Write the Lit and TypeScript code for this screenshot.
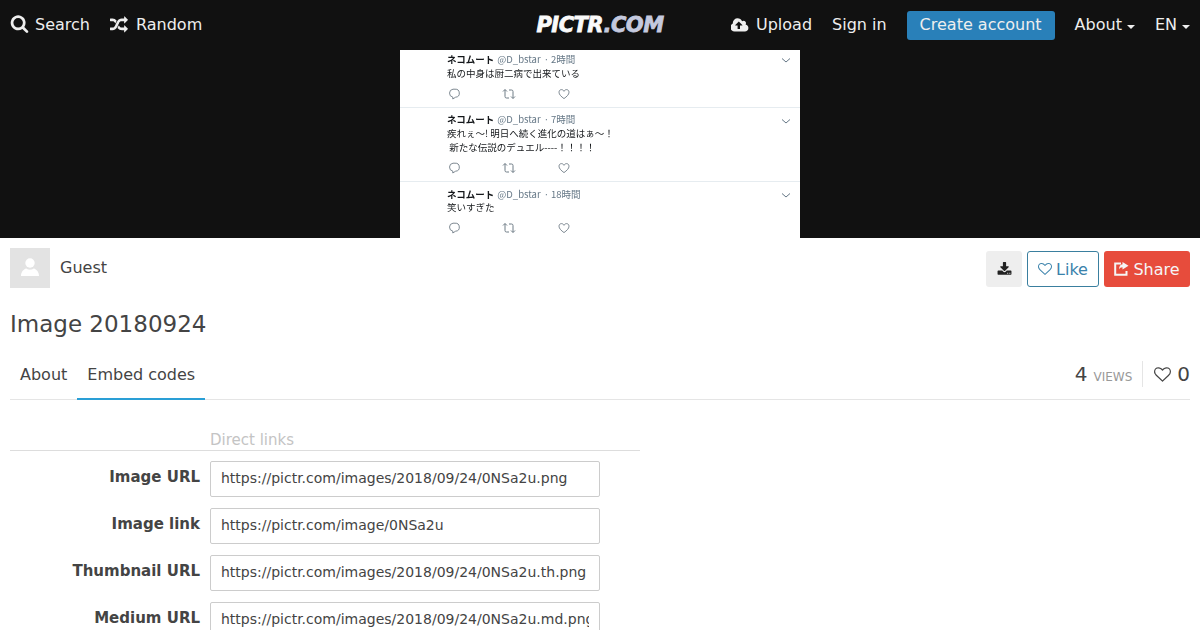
import { LitElement, html, css, svg } from "lit";
import { customElement } from "lit/decorators.js";

const P = {
  search: "M1216 832q0-185-131.5-316.5t-316.5-131.5-316.5 131.5-131.5 316.5 131.5 316.5 316.5 131.5 316.5-131.5 131.5-316.5zm512 832q0 52-38 90t-90 38q-54 0-90-38l-343-342q-179 124-399 124-143 0-273.5-55.5t-225-150-150-225-55.5-273.5 55.5-273.5 150-225 225-150 273.5-55.5 273.5 55.5 225 150 150 225 55.5 273.5q0 220-124 399l343 343q37 37 37 90z",
  random: "M666 481q-60 92-137 273-22-45-37-72.5t-40.5-63.5-51-56.5-63-35-81.5-14.5h-224q-14 0-23-9t-9-23v-192q0-14 9-23t23-9h224q250 0 410 225zm1126 799q0 14-9 23l-320 320q-9 9-23 9-13 0-22.5-9.5t-9.5-22.5v-192q-32 0-85 .5t-81 1-73-1-71-5-64-10.5-63-18.5-58-28.5-59-40-55-53.5-56-69.5q59-93 136-273 22 45 37 72.5t40.5 63.5 51 56.5 63 35 81.5 14.5h256v-192q0-14 9-23t23-9q12 0 24 10l319 319q9 9 9 23zm0-896q0 14-9 23l-320 320q-9 9-23 9-13 0-22.5-9.5t-9.5-22.5v-192h-256q-48 0-87 15t-69 45-51 61.5-45 77.5q-32 62-78 171-29 66-49.5 111t-54 105-64 100-74 83-90 68.5-106.5 42-128 16.5h-224q-14 0-23-9t-9-23v-192q0-14 9-23t23-9h224q48 0 87-15t69-45 51-61.5 45-77.5q32-62 78-171 29-66 49.5-111t54-105 64-100 74-83 90-68.5 106.5-42 128-16.5h256v-192q0-14 9-23t23-9q12 0 24 10l319 319q9 9 9 23z",
  upload: "M1216 864q0-14-9-23l-352-352q-9-9-23-9t-23 9l-351 351q-10 12-10 24 0 14 9 23t23 9h224v352q0 13 9.5 22.5t22.5 9.5h192q13 0 22.5-9.5t9.5-22.5v-352h224q13 0 22.5-9.5t9.5-22.5zm640 288q0 159-112.5 271.5t-271.5 112.5h-1088q-185 0-316.5-131.5t-131.5-316.5q0-130 70-240t188-165q-2-30-2-43 0-212 150-362t362-150q156 0 285.5 87t188.5 231q71-62 166-62 106 0 181 75t75 181q0 76-41 138 130 31 213.5 135.5t83.5 238.5z",
  download: "M1344 1344q0-26-19-45t-45-19-45 19-19 45 19 45 45 19 45-19 19-45zm256 0q0-26-19-45t-45-19-45 19-19 45 19 45 45 19 45-19 19-45zm128-224v320q0 40-28 68t-68 28h-1472q-40 0-68-28t-28-68v-320q0-40 28-68t68-28h465l135 136q58 56 136 56t136-56l136-136h464q40 0 68 28t28 68zm-325-569q17 41-14 70l-448 448q-18 19-45 19t-45-19l-448-448q-31-29-14-70 17-39 59-39h256v-448q0-26 19-45t45-19h256q26 0 45 19t19 45v448h256q42 0 59 39z",
  heart: "M1664 596q0-81-21.5-143t-55-98.5-81.5-59.5-94-31-98-8-112 25.5-110.5 64-86.5 72-60 61.5q-18 22-49 22t-49-22q-24-28-60-61.5t-86.5-72-110.5-64-112-25.5-98 8-94 31-81.5 59.5-55 98.5-21.5 143q0 168 187 355l581 560 580-559q188-188 188-356zm128 0q0 221-229 450l-623 600q-18 18-44 18t-44-18l-624-602q-10-8-27.5-26t-55.5-65.5-68-97.5-53.5-121-23.5-138q0-220 127-344t351-124q62 0 126.5 21.5t120 58 95.5 68.5 76 68q36-36 76-68t95.5-68.5 120-58 126.5-21.5q224 0 351 124t127 344z",
};

const fa = (d: string, w: number, h: number, vw = 1792) => html`<svg class="fa" width=${w} height=${h} viewBox="0 0 ${vw} 1792" fill="currentColor"><path d=${d}></path></svg>`;

const shareIcon = html`<svg class="fa" width="15" height="14" viewBox="0 0 15 14"><path d="M7 1.500H1.200v11.300h11.300V9" fill="none" stroke="currentColor" stroke-width="2"></path><path d="M8.500 0 14.500 3.700 8.500 7.400V5.200C6.800 5.200 5.700 6 5 7.500 5 4.500 6.300 2.400 8.500 2.200z" fill="currentColor"></path></svg>`;

const tweetActions = html`
  <div class="actions">
    <svg width="12" height="12" viewBox="0 0 12 12" fill="none" stroke="#6f7c86" stroke-width="0.9"><path d="M5 1.2h2a4 4 0 0 1 .6 8L4.8 11V9.1A4 4 0 0 1 5 1.2z"></path></svg>
    <svg width="14" height="12" viewBox="0 0 14 12" fill="none" stroke="#6f7c86" stroke-width="1"><path d="M1 3.5 3 1.5l2 2M3 1.7V8.5a1.5 1.5 0 0 0 1.5 1.5H7M13 8.5l-2 2-2-2M11 10.3V3.5A1.5 1.5 0 0 0 9.5 2H7"></path></svg>
    <svg width="12" height="12" viewBox="0 0 12 12" fill="none" stroke="#6f7c86" stroke-width="0.9"><path d="M6 10.6C3.2 8.5 1 6.6 1 4.2 1 2.7 2.1 1.6 3.4 1.6c1.1 0 2 .6 2.6 1.7.6-1.1 1.5-1.7 2.6-1.7C9.9 1.6 11 2.7 11 4.2c0 2.4-2.2 4.3-5 6.4z"></path></svg>
  </div>`;

const chevron = svg`<path d="M1 1.5 5 5 9 1.5" fill="none" stroke="#657786" stroke-width="1"></path>`;

const tweets = [
  { time: "2時間", lines: ["私の中身は厨二病で出来ている"], cls: "t1" },
  { time: "7時間", lines: ["疾れぇ～! 明日へ続く進化の道はぁ～！", " 新たな伝説のデュエル----！！！！"], cls: "t2" },
  { time: "18時間", lines: ["笑いすぎた"], cls: "t3" },
];

const rows = [
  ["Image URL", "https://pictr.com/images/2018/09/24/0NSa2u.png"],
  ["Image link", "https://pictr.com/image/0NSa2u"],
  ["Thumbnail URL", "https://pictr.com/images/2018/09/24/0NSa2u.th.png"],
  ["Medium URL", "https://pictr.com/images/2018/09/24/0NSa2u.md.png"],
];

@customElement("app-root")
export class AppRoot extends LitElement {
  static styles = css`
    :host { display: block; height: 630px; overflow: hidden; background: #fff; color: #333; font: 16px/22px "DejaVu Sans", sans-serif; }
    * { box-sizing: border-box; }
    .fa { display: block; flex: none; }
    nav { height: 50px; background: #111; color: #eee; display: grid; grid-template-columns: 1fr auto 1fr; align-items: center; padding: 0 10px; }
    .side { display: flex; align-items: center; gap: 20px; }
    .side.right { justify-content: flex-end; }
    .item { display: flex; align-items: center; gap: 8px; white-space: nowrap; }
    .item.find { gap: 6px; }
    .item.find .fa { margin-bottom: 3px; }
    .item.cloud { gap: 7px; }
    .logo { font: italic 700 21px/30px "DejaVu Sans", sans-serif; letter-spacing: -0.5px; width: 128px; white-space: nowrap; text-align: center; -webkit-text-stroke: 0.8px currentColor; color: #fafafa; }
    .logo span { color: #c4c9de; }
    .cta { height: 29px; padding: 0 13px; border-radius: 3px; background: #2980b9; display: flex; align-items: center; }
    .caret { width: 0; height: 0; border-top: 4px solid currentColor; border-left: 4px solid transparent; border-right: 4px solid transparent; margin-top: 3px; }
    .item.drop { gap: 5px; }

    .stage { height: 188px; background: #111; display: flex; justify-content: center; }
    .shot { width: 400px; background: #fff; overflow: hidden; font-family: "Noto Sans CJK JP", sans-serif; filter: blur(0.3px); }
    .tweet { position: relative; padding-left: 47px; border-bottom: 1px solid #e6ecf0; color: #14171a; font-size: 9.5px; line-height: 14px; }
    .tweet.t1 { height: 58px; padding-top: 2px; }
    .tweet.t2 { height: 74px; padding-top: 4px; }
    .tweet.t3 { height: 56px; padding-top: 5px; border: 0; }
    .tweet.t3 .line { margin-top: -1px; }
    .head { display: flex; gap: 3px; height: 14px; white-space: nowrap; }
    .head b { font-weight: 700; }
    .head span { color: #657786; }
    .head .time { margin-left: -1px; }
    .chev { position: absolute; left: 381px; top: 7px; }
    .tweet.t2 .chev { top: 10px; }
    .tweet.t3 .chev { top: 10px; }
    .line { height: 14px; white-space: pre; }
    .actions { display: flex; align-items: center; gap: 42px; margin-top: 8px; height: 12px; padding-left: 1px; }

    main { padding: 0 10px; }
    .owner { height: 62px; display: flex; justify-content: space-between; align-items: flex-start; }
    .user { display: flex; align-items: center; gap: 10px; margin-top: 10px; height: 40px; color: #444; }
    .avatar { width: 40px; height: 40px; background: #e3e3e3; display: flex; align-items: center; justify-content: center; }
    .avatar svg { margin-bottom: 2px; }
    .btns { display: flex; gap: 5px; margin-top: 13px; }
    .btn { height: 36px; border-radius: 3px; display: flex; align-items: center; justify-content: center; gap: 4px; }
    .btn span { padding-top: 2px; }
    .dl { width: 36px; background: #eee; color: #222; }
    .like { width: 72px; border: 1px solid #3a7f9f; color: #3a82ab; }
    .sharebtn { width: 86px; background: #e74c3c; color: #f5f5f5; }
    h1 { margin: 0; font-size: 23px; font-weight: 400; line-height: 30px; height: 49px; padding-top: 9px; color: #444; }
    .tabsbar { height: 51px; border-bottom: 1px solid #e5e5e5; display: flex; justify-content: space-between; }
    .tabs { display: flex; }
    .tab { height: 51px; padding: 0 10px; display: flex; align-items: center; color: #444; }
    .tab.on { box-shadow: inset 0 -2px 0 #2a9fd6; }
    .stats { display: flex; align-items: center; color: #444; }
    .num { font-size: 20px; }
    .views { font-size: 12px; color: #999; margin-left: 6px; padding-top: 5px; }
    .sep { width: 1px; height: 26px; background: #e5e5e5; margin: 0 11px 0 10px; }
    .likes { display: flex; align-items: center; gap: 6px; }

    .form { width: 630px; margin-top: 28px; }
    .section { height: 23px; border-bottom: 1px solid #ddd; padding-left: 200px; color: #c4c4c4; font-size: 15px; line-height: 24px; margin-bottom: 10px; }
    .row { display: grid; grid-template-columns: 190px 390px; column-gap: 10px; margin-bottom: 11px; }
    label { text-align: right; font-weight: 700; font-size: 15px; color: #444; line-height: 32px; }
    input { width: 390px; height: 36px; border: 1px solid #ccc; border-radius: 2px; padding: 0 10px 2px; font: 14px "DejaVu Sans", sans-serif; color: #444; background: #fff; outline: 0; }
  `;

  render() {
    return html`
      <nav>
        <div class="side">
          <div class="item find">${fa(P.search, 19, 19)}<span>Search</span></div>
          <div class="item">${fa(P.random, 18, 18)}<span>Random</span></div>
        </div>
        <div class="logo">PICTR<span>.COM</span></div>
        <div class="side right">
          <div class="item cloud">${fa(P.upload, 18, 17, 1920)}<span>Upload</span></div>
          <div class="item">Sign in</div>
          <div class="cta">Create account</div>
          <div class="item drop"><span>About</span><i class="caret"></i></div>
          <div class="item drop"><span>EN</span><i class="caret"></i></div>
        </div>
      </nav>
      <section class="stage">
        <div class="shot">
          ${tweets.map((t) => html`
            <div class="tweet ${t.cls}">
              <div class="head"><b>ネコムート</b><span>@D_bstar</span><span>·</span><span class="time">${t.time}</span></div>
              ${t.lines.map((l) => html`<div class="line">${l}</div>`)}
              ${tweetActions}
              <svg class="chev" width="10" height="6" viewBox="0 0 10 6">${chevron}</svg>
            </div>`)}
        </div>
      </section>
      <main>
        <div class="owner">
          <div class="user">
            <div class="avatar">
              <svg width="18" height="18" viewBox="0 0 20 20" fill="#fff"><circle cx="10" cy="5.600" r="5.200"></circle><path d="M0 20c0-4 2.500-7.500 6-8.200 1 .9 2.500 1.300 4 1.300s3-.4 4-1.300c3.500.7 6 4.200 6 8.200z"></path></svg>
            </div>
            <span>Guest</span>
          </div>
          <div class="btns">
            <div class="btn dl">${fa(P.download, 15, 15)}</div>
            <div class="btn like">${fa(P.heart, 14, 14)}<span>Like</span></div>
            <div class="btn sharebtn">${shareIcon}<span>Share</span></div>
          </div>
        </div>
        <h1>Image 20180924</h1>
        <div class="tabsbar">
          <div class="tabs"><div class="tab">About</div><div class="tab on">Embed codes</div></div>
          <div class="stats">
            <span class="num">4</span><span class="views">VIEWS</span><i class="sep"></i>
            <div class="likes">${fa(P.heart, 17, 17)}<span class="num">0</span></div>
          </div>
        </div>
        <div class="form">
          <div class="section">Direct links</div>
          ${rows.map(([l, v]) => html`<div class="row"><label>${l}</label><input readonly .value=${v} /></div>`)}
        </div>
      </main>
    `;
  }
}
